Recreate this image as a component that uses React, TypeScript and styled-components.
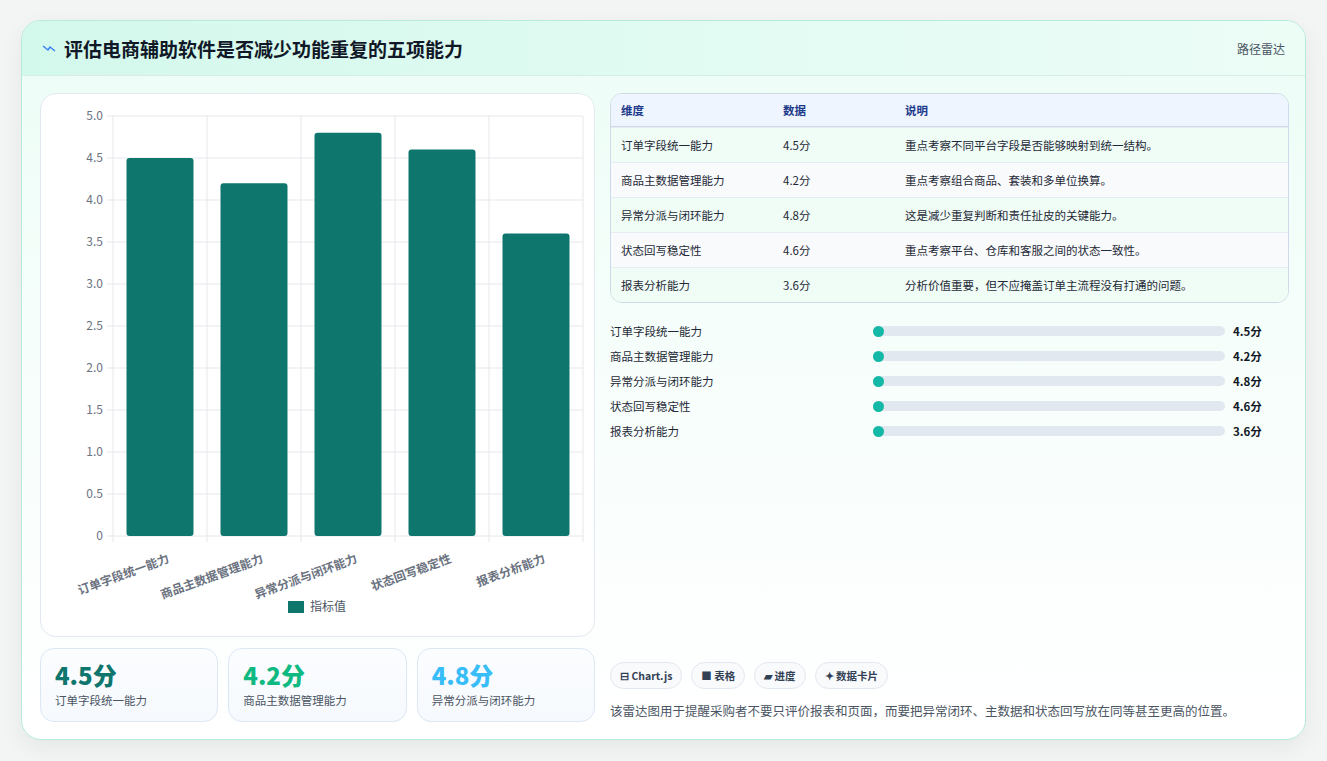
import React from 'react';
import styled, { createGlobalStyle } from 'styled-components';

const GlobalStyle = createGlobalStyle`
  body {
    margin: 0;
    background: #f3f4f4;
    font-family: "Noto Sans CJK SC", "Noto Sans", sans-serif;
    color: #1f2937;
  }
`;

const Page = styled.div`
  padding: 20px 21px 20px 21px;
`;

const Card = styled.div`
  width: 1285px;
  height: 720px;
  box-sizing: border-box;
  border: 1px solid #b7eadc;
  border-radius: 20px;
  background: linear-gradient(180deg, #ecfdf6 0%, #f7fefb 50%, #ffffff 100%);
  box-shadow: 0 8px 24px rgba(0, 0, 0, 0.06);
  overflow: hidden;
  display: flex;
  flex-direction: column;
`;

const Header = styled.div`
  height: 55px;
  flex: none;
  box-sizing: border-box;
  display: flex;
  align-items: center;
  justify-content: space-between;
  padding: 0 20px 0 20px;
  background: linear-gradient(90deg, #d3f8ec 0%, #e3fbf3 60%, #ecfdf6 100%);
  border-bottom: 1px solid #d5efe6;
`;

const Title = styled.h1`
  margin: 0;
  font-size: 19px;
  font-weight: 700;
  color: #111827;
  display: flex;
  align-items: center;
  gap: 8px;
`;

const Tag = styled.span`
  font-size: 12px;
  color: #4b5563;
`;

const Body = styled.div`
  flex: 1;
  display: grid;
  grid-template-columns: 555px 679px;
  gap: 15px;
  padding: 17px 18px 18px 18px;
`;

const Column = styled.div`
  display: flex;
  flex-direction: column;
  gap: 11px;
`;

const ChartBox = styled.div`
  height: 544px;
  box-sizing: border-box;
  border: 1px solid #e2e8f0;
  border-radius: 16px;
  background: #fff;
  overflow: hidden;
`;

const Stats = styled.div`
  display: grid;
  grid-template-columns: repeat(3, 1fr);
  gap: 10px;
`;

const Stat = styled.div`
  height: 74px;
  box-sizing: border-box;
  border: 1px solid #dbe7f3;
  border-radius: 14px;
  background: linear-gradient(180deg, #fbfdff, #f6f9fd);
  padding: 11px 14px;
`;

const StatValue = styled.div<{ $color: string }>`
  font-size: 24px;
  font-weight: 800;
  line-height: 30px;
  color: ${p => p.$color};
`;

const StatLabel = styled.div`
  font-size: 11.5px;
  color: #4b5563;
  margin-top: 2px;
`;

const Table = styled.table`
  width: 100%;
  border-collapse: separate;
  border-spacing: 0;
  border: 1px solid #cfdae8;
  border-radius: 12px;
  overflow: hidden;
  font-size: 11.5px;
`;

const Th = styled.th`
  text-align: left;
  font-weight: 600;
  color: #1e3a8a;
  background: #eef5ff;
  height: 32px;
  padding: 0 10px;
  border-bottom: 1px solid #cfdae8;
`;

const Td = styled.td<{ $alt: boolean }>`
  height: 34px;
  padding: 0 10px;
  color: #1f2937;
  background: ${p => (p.$alt ? '#f8fafc' : '#f0fcf6')};
  border-top: 1px solid #e5ecf3;
`;

const Bars = styled.div`
  display: flex;
  flex-direction: column;
  gap: 7px;
  margin-top: 8px;
`;

const BarRow = styled.div`
  display: grid;
  grid-template-columns: 255px 352px 1fr;
  gap: 8px;
  align-items: center;
  font-size: 11.5px;
  height: 18px;
`;

const Track = styled.div`
  height: 10px;
  border-radius: 5px;
  background: #e2e8f0;
  position: relative;
`;

const Dot = styled.div`
  width: 11px;
  height: 11px;
  border-radius: 50%;
  background: #14b8a6;
  position: absolute;
  top: -0.5px;
  left: 0;
`;

const BarValue = styled.span`
  font-weight: 700;
  color: #111827;
`;

const Footer = styled.div`
  margin-top: auto;
  display: flex;
  flex-direction: column;
  gap: 12px;
`;

const Chips = styled.div`
  display: flex;
  gap: 9px;
`;

const Chip = styled.span`
  height: 27px;
  box-sizing: border-box;
  padding: 0 9px;
  display: flex;
  align-items: center;
  gap: 4px;
  border: 1px solid #e2e8f0;
  border-radius: 14px;
  background: #f8fafc;
  font-size: 10.5px;
  font-weight: 600;
  color: #334155;
`;

const Note = styled.p`
  margin: 0 0 2px;
  font-size: 12.5px;
  color: #4b5563;
`;

const data = [
  { name: '订单字段统一能力', v: 4.5, note: '重点考察不同平台字段是否能够映射到统一结构。' },
  { name: '商品主数据管理能力', v: 4.2, note: '重点考察组合商品、套装和多单位换算。' },
  { name: '异常分派与闭环能力', v: 4.8, note: '这是减少重复判断和责任扯皮的关键能力。' },
  { name: '状态回写稳定性', v: 4.6, note: '重点考察平台、仓库和客服之间的状态一致性。' },
  { name: '报表分析能力', v: 3.6, note: '分析价值重要，但不应掩盖订单主流程没有打通的问题。' },
];

const Chart: React.FC = () => {
  const x0 = 72, x1 = 542, y0 = 442, yTop = 22;
  const step = (x1 - x0) / 5;
  const unit = (y0 - yTop) / 5;
  const ticks = [0, 0.5, 1, 1.5, 2, 2.5, 3, 3.5, 4, 4.5, 5];
  return (
    <svg width="554" height="543" viewBox="0 0 554 543" fontFamily='"Noto Sans CJK SC", "Noto Sans", sans-serif'>
      {ticks.map(t => {
        const y = y0 - t * unit;
        return (
          <g key={t}>
            <line x1={x0 - 6} x2={x1} y1={y} y2={y} stroke="#e5e7eb" />
            <text x={x0 - 10} y={y + 4} fontSize="12" fill="#6b7280" textAnchor="end">
              {t === 0 ? '0' : t.toFixed(1)}
            </text>
          </g>
        );
      })}
      {[0, 1, 2, 3, 4, 5].map(i => (
        <line key={i} x1={x0 + i * step} x2={x0 + i * step} y1={yTop} y2={y0 + 6} stroke="#e5e7eb" />
      ))}
      {data.map((d, i) => {
        const cx = x0 + step * (i + 0.5);
        const h = d.v * unit;
        return (
          <g key={d.name}>
            <rect x={cx - 33.5} y={y0 - h} width="67" height={h} rx="3" fill="#0f766e" />
            <text
              x={cx + 10}
              y={y0 + 26}
              fontSize="12"
              fontWeight="600"
              fill="#6b7280"
              textAnchor="end"
              transform={`rotate(-20 ${cx + 10} ${y0 + 26})`}
            >
              {d.name}
            </text>
          </g>
        );
      })}
      <rect x="247" y="507" width="16" height="12" fill="#0f766e" />
      <text x="269" y="517" fontSize="12" fill="#4b5563">指标值</text>
    </svg>
  );
};

export default function App() {
  return (
    <Page>
      <GlobalStyle />
      <Card>
        <Header>
          <Title>
            <svg width="14" height="10" viewBox="0 0 14 10">
              <path d="M1 3 L6 7 L8 4 L13 8" stroke="#3b82f6" strokeWidth="1.5" fill="none" />
            </svg>
            评估电商辅助软件是否减少功能重复的五项能力
          </Title>
          <Tag>路径雷达</Tag>
        </Header>
        <Body>
          <Column>
            <ChartBox>
              <Chart />
            </ChartBox>
            <Stats>
              <Stat>
                <StatValue $color="#0f766e">4.5分</StatValue>
                <StatLabel>订单字段统一能力</StatLabel>
              </Stat>
              <Stat>
                <StatValue $color="#10b981">4.2分</StatValue>
                <StatLabel>商品主数据管理能力</StatLabel>
              </Stat>
              <Stat>
                <StatValue $color="#38bdf8">4.8分</StatValue>
                <StatLabel>异常分派与闭环能力</StatLabel>
              </Stat>
            </Stats>
          </Column>
          <Column>
            <Table>
              <thead>
                <tr>
                  <Th style={{ width: 142 }}>维度</Th>
                  <Th style={{ width: 102 }}>数据</Th>
                  <Th>说明</Th>
                </tr>
              </thead>
              <tbody>
                {data.map((d, i) => (
                  <tr key={d.name}>
                    <Td $alt={i % 2 === 1}>{d.name}</Td>
                    <Td $alt={i % 2 === 1}>{d.v}分</Td>
                    <Td $alt={i % 2 === 1}>{d.note}</Td>
                  </tr>
                ))}
              </tbody>
            </Table>
            <Bars>
              {data.map(d => (
                <BarRow key={d.name}>
                  <span>{d.name}</span>
                  <Track>
                    <Dot />
                  </Track>
                  <BarValue>{d.v}分</BarValue>
                </BarRow>
              ))}
            </Bars>
            <Footer>
              <Chips>
                <Chip>⊟ Chart.js</Chip>
                <Chip>■ 表格</Chip>
                <Chip>▰ 进度</Chip>
                <Chip>✦ 数据卡片</Chip>
              </Chips>
              <Note>该雷达图用于提醒采购者不要只评价报表和页面，而要把异常闭环、主数据和状态回写放在同等甚至更高的位置。</Note>
            </Footer>
          </Column>
        </Body>
      </Card>
    </Page>
  );
}
